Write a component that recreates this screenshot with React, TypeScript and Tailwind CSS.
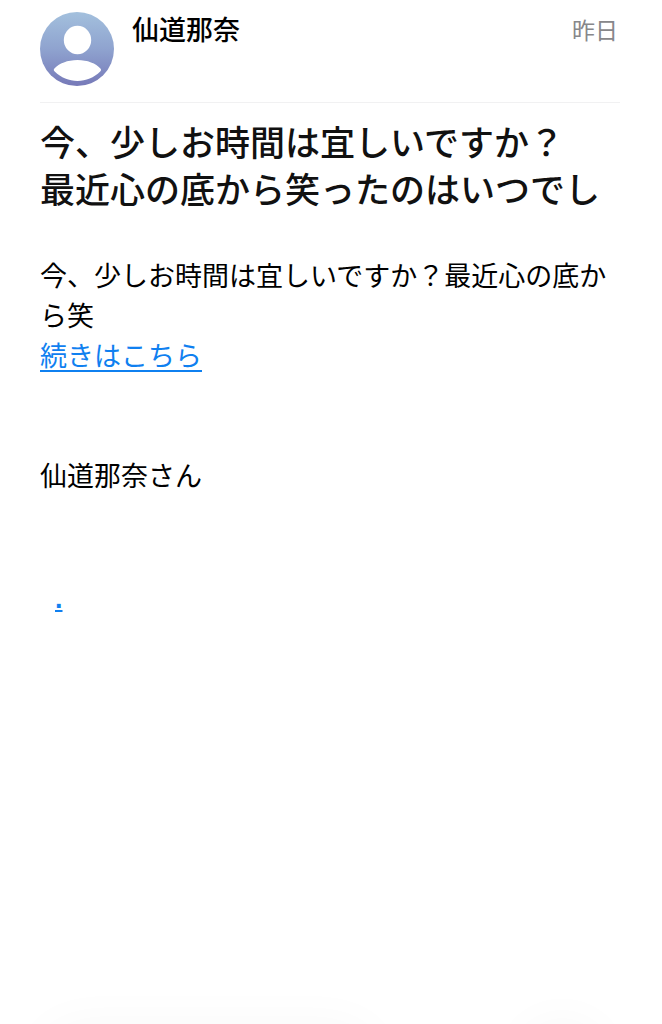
import React from 'react'

const Avatar = () => (
  <svg viewBox="0 0 74 74" className="size-[74px] shrink-0" role="img" aria-label="仙道那奈">
    <defs>
      <linearGradient id="avatar-fill" x1="0" y1="0" x2="0" y2="1">
        <stop offset="0" stopColor="#a3c0dd" />
        <stop offset="0.5" stopColor="#8fa3cf" />
        <stop offset="1" stopColor="#7679b8" />
      </linearGradient>
    </defs>
    <circle cx="37" cy="37" r="37" fill="url(#avatar-fill)" />
    <ellipse cx="37.5" cy="28" rx="13.7" ry="14.3" fill="white" />
    <path d="M14.4 56.5C19 51.5 27.5 48 37.5 48S56 51.5 60.4 56.5C61.3 57.6 61.2 58.6 60.2 59.6C54 65.8 46 69 37.5 69S21 65.8 14.7 59.6C13.6 58.6 13.5 57.6 14.4 56.5Z" fill="white" />
  </svg>
)

export default function App() {
  return (
    <div className="min-h-screen bg-white pt-3 pr-[42px] pl-10 font-['Noto_Sans_CJK_JP',sans-serif] text-[#111111]" lang="ja">
      <header className="flex items-start border-b border-[#f1f1f2] pb-4">
        <Avatar />
        <p className="ml-[18px] text-[27px] leading-[34px] font-medium text-black">仙道那奈</p>
        <time className="mr-[2px] ml-auto text-[23px] leading-[34px] font-normal text-[#87878a]">昨日</time>
      </header>

      <main>
        <h1 className="mt-[14px] text-[35px] leading-[47px] font-medium">
          今、少しお時間は宜しいですか？
          <br />
          最近心の底から笑ったのはいつでし
        </h1>

        <div className="mt-[44px] text-[27px] leading-10 font-normal text-black">
          <p>今、少しお時間は宜しいですか？最近心の底から笑</p>
          <a href="#more" className="text-[#0f80f0] underline decoration-2 underline-offset-4">続きはこちら</a>
          <p className="mt-20">仙道那奈さん</p>
          <a href="#end" className="mt-[84px] ml-[15px] inline-block font-['Liberation_Sans',sans-serif] font-bold text-[#0f80f0] underline decoration-2 underline-offset-2">.</a>
        </div>
      </main>

      <div className="pointer-events-none fixed inset-x-0 top-full flex justify-between pr-[60px] pl-10" aria-hidden="true">
        <div className="h-20 w-3/5 rounded-full shadow-[0_0_50px_rgba(0,0,0,0.03)]" />
        <div className="size-20 rounded-full shadow-[0_0_50px_rgba(0,0,0,0.04)]" />
      </div>
    </div>
  )
}
